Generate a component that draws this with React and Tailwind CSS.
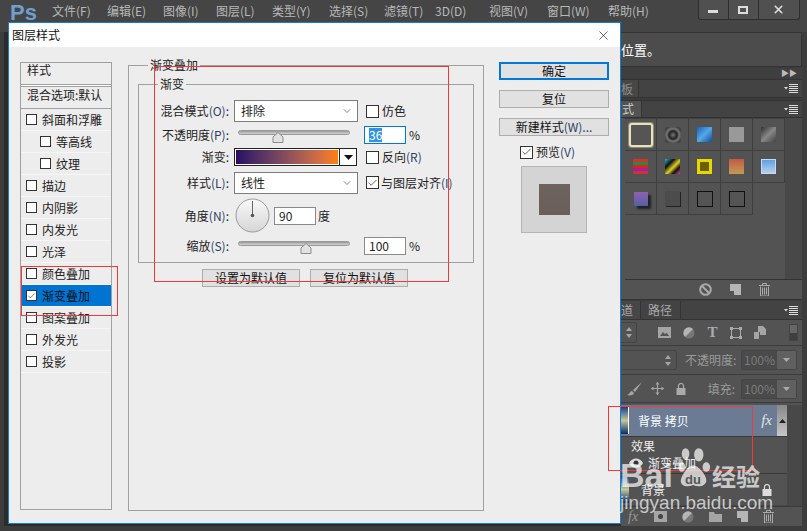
import { X, ChevronDown, Check } from "lucide-react";

const font = { fontFamily: '"Noto Sans CJK SC", "Liberation Sans", sans-serif' };

const menus = [
  ["文件(F)", "w-[55px]"],
  ["编辑(E)", "w-[56px]"],
  ["图像(I)", "w-[53px]"],
  ["图层(L)", "w-[56px]"],
  ["类型(Y)", "w-[57px]"],
  ["选择(S)", "w-[55px]"],
  ["滤镜(T)", "w-[51px]"],
  ["3D(D)", "w-[54px]"],
  ["视图(V)", "w-[58px]"],
  ["窗口(W)", "w-[61px]"],
  ["帮助(H)", "w-[60px]"],
];

const effects = [
  { name: "斜面和浮雕" },
  { name: "等高线", sub: true },
  { name: "纹理", sub: true },
  { name: "描边" },
  { name: "内阴影" },
  { name: "内发光" },
  { name: "光泽" },
  { name: "颜色叠加" },
  { name: "渐变叠加", active: true },
  { name: "图案叠加" },
  { name: "外发光" },
  { name: "投影" },
];

function CheckBox({ checked, big }) {
  return (
    <span
      className={`flex shrink-0 items-center justify-center border border-[#333] bg-white ${
        big ? "h-[13px] w-[13px]" : "h-[11px] w-[11px]"
      }`}
    >
      {checked && <Check size={big ? 12 : 10} strokeWidth={1.8} className="text-[#444]" />}
    </span>
  );
}

function Label({ text, hint, extra }) {
  return (
    <span className="w-[91px] pr-[1px] text-right text-[12px] text-[#222]">
      {text}
      {hint && <span className="text-[#2b3f66]">{hint}</span>}
      {extra || ":"}
    </span>
  );
}

function Select({ value }) {
  return (
    <div className="flex h-[22px] w-[124px] items-center justify-between border border-[#7d7d7d] bg-white pl-[6px] pr-[4px] text-[12px] text-[#222]">
      <span>{value}</span>
      <ChevronDown size={12} strokeWidth={1.3} className="text-[#444]" />
    </div>
  );
}

function Slider({ pos }) {
  return (
    <div className="relative ml-[8px] h-[18px] w-[112px]">
      <div className="mt-[4px] h-[5px] rounded-full border border-[#999] bg-gradient-to-b from-[#9a9a9a] to-[#d4d4d4]" />
      <svg width="12" height="11" viewBox="0 0 12 11" className="absolute top-[6px]" style={{ left: pos }}>
        <path d="M6 .5 11 5v5.5H1V5z" fill="#e2e2e2" stroke="#8c8c8c" />
      </svg>
    </div>
  );
}

function NumberBox({ value, focus }) {
  return (
    <div
      className={`flex h-[18px] w-[42px] items-center border bg-white pl-[4px] text-[12px] text-[#222] ${
        focus ? "border-[#0078d7]" : "border-[#8a8a8a]"
      }`}
    >
      {focus ? <span className="bg-[#3393df] leading-[14px] text-white">{value}</span> : value}
    </div>
  );
}

function DialogButton({ children, className }) {
  return (
    <div
      className={`flex items-center justify-center bg-[#e1e1e1] text-[12px] leading-none text-[#111] ${className}`}
    >
      {children}
    </div>
  );
}

function GroupLegend({ children, className }) {
  return (
    <span className={`absolute bg-[#ededed] px-[2px] text-[12px] leading-[14px] text-[#222] ${className}`}>
      {children}
    </span>
  );
}

function Dial() {
  return (
    <svg width="35" height="35" viewBox="0 0 35 35" className="shrink-0">
      <defs>
        <linearGradient id="dial" x1="0" y1="0" x2="0" y2="1">
          <stop offset="0" stopColor="#f8f8f8" />
          <stop offset="1" stopColor="#d6d6d6" />
        </linearGradient>
      </defs>
      <circle cx="17.5" cy="17.5" r="16.5" fill="url(#dial)" stroke="#9a9a9a" />
      <path d="M17.5 3v14" stroke="#666" strokeWidth="1" />
      <circle cx="17.5" cy="17.5" r="1.8" fill="#555" />
    </svg>
  );
}

function Dialog() {
  return (
    <div className="absolute left-[8px] top-[22px] flex h-[502px] w-[613px] flex-col border border-[#0f7fd8] bg-[#ededed]" style={font}>
      <div className="flex h-[24px] shrink-0 items-center justify-between bg-white pl-[3px] pr-[9px] text-[12px] text-[#111]">
        <span>图层样式</span>
        <X size={15} strokeWidth={1} className="text-[#111]" />
      </div>

      <div className="flex flex-1 pl-[11px] pr-[11px] pt-[15px]">
        {/* left list */}
        <div className="mr-[16px] h-[448px] w-[92px] shrink-0 border border-[#a0a0a0] text-[12px] text-[#222]">
          <div className="h-[21px] pl-[6px] leading-[14px]">样式</div>
          <div className="h-[25px] border-y border-[#a0a0a0] pl-[6px] leading-[19px] [box-shadow:inset_0_1px_0_#fff,inset_0_2px_0_#a0a0a0]">混合选项:默认</div>
          {effects.map((e) => (
            <div
              key={e.name}
              className={`flex h-[22px] items-center border-b border-[#f6f6f6] ${e.sub ? "pl-[19px]" : "pl-[5px]"} ${
                e.active ? "bg-[#0074d3] text-[#111]" : ""
              }`}
            >
              <CheckBox checked={e.active} />
              <span className="ml-[5px] whitespace-nowrap">{e.name}</span>
            </div>
          ))}
        </div>

        {/* main group */}
        <div className="relative mt-[3px] h-[446px] w-[356px] shrink-0 border border-[#a0a0a0] pl-[9px] pt-[18px]">
          <GroupLegend className="left-[19px] top-[-8px]">渐变叠加</GroupLegend>
          <div className="relative h-[179px] w-[336px] border border-[#a0a0a0] pt-[15px]">
            <GroupLegend className="left-[19px] top-[-8px]">渐变</GroupLegend>

            <div className="flex h-[22px] items-center">
              <Label text="混合模式" hint="(O)" />
              <span className="w-[4px]" />
              <Select value="排除" />
              <span className="w-[8px]" />
              <CheckBox big />
              <span className="ml-[3px] text-[12px] text-[#222]">仿色</span>
            </div>

            <div className="mt-[4px] flex h-[18px] items-center">
              <Label text="不透明度" hint="(P)" />
              <Slider pos="34px" />
              <span className="w-[14px]" />
              <NumberBox value="36" focus />
              <span className="ml-[3px] text-[12px] text-[#222]">%</span>
            </div>

            <div className="mt-[4px] flex h-[18px] items-center">
              <Label text="渐变" extra=":" />
              <span className="w-[4px]" />
              <div className="flex h-[18px] w-[123px] border border-[#222] bg-white">
                <div className="m-[1px] w-[102px] bg-gradient-to-r from-[#2b0a63] to-[#ff7f00]" />
                <div className="flex flex-1 items-center justify-center border-l border-[#222]">
                  <svg width="9" height="5" viewBox="0 0 9 5">
                    <path d="M0 0h9L4.5 5z" fill="#111" />
                  </svg>
                </div>
              </div>
              <span className="w-[9px]" />
              <CheckBox big />
              <span className="ml-[3px] text-[12px] text-[#222]">反向<span className="text-[#2b3f66]">(R)</span></span>
            </div>

            <div className="mt-[6px] flex h-[21px] items-center">
              <Label text="样式" hint="(L)" />
              <span className="w-[4px]" />
              <Select value="线性" />
              <span className="w-[8px]" />
              <CheckBox big checked />
              <span className="ml-[2px] whitespace-nowrap text-[12px] text-[#222]">与图层对齐<span className="text-[#2b3f66]">(I)</span></span>
            </div>

            <div className="mt-[5px] flex h-[35px] items-center">
              <Label text="角度" hint="(N)" />
              <span className="w-[5px]" />
              <Dial />
              <span className="w-[4px]" />
              <NumberBox value="90" />
              <span className="ml-[2px] text-[12px] text-[#222]">度</span>
            </div>

            <div className="mt-[4px] flex h-[18px] items-center">
              <Label text="缩放" hint="(S)" />
              <Slider pos="62px" />
              <span className="w-[14px]" />
              <NumberBox value="100" />
              <span className="ml-[3px] text-[12px] text-[#222]">%</span>
            </div>
          </div>

          <div className="ml-[64px] mt-[6px] flex gap-[10px]">
            <DialogButton className="h-[18px] w-[98px] border border-[#adadad]">设置为默认值</DialogButton>
            <DialogButton className="h-[18px] w-[98px] border border-[#adadad]">复位为默认值</DialogButton>
          </div>
        </div>

        {/* right buttons */}
        <div className="ml-[15px] w-[110px] shrink-0">
          <DialogButton className="h-[18px] w-[110px] border-2 border-[#0078d7]">确定</DialogButton>
          <DialogButton className="mt-[10px] h-[18px] w-[110px] border border-[#adadad]">复位</DialogButton>
          <DialogButton className="mt-[10px] h-[18px] w-[110px] border border-[#adadad]">
            新建样式<span className="text-[#2b3f66]">(W)...</span>
          </DialogButton>
          <div className="ml-[21px] mt-[9px] flex h-[14px] items-center text-[12px] text-[#222]">
            <CheckBox big checked />
            <span className="ml-[3px]">预览<span className="text-[#2b3f66]">(V)</span></span>
          </div>
          <div className="ml-[22px] mt-[7px] flex h-[67px] w-[66px] items-center justify-center border border-[#b5b5b5] bg-[#d4d4d4]">
            <div className="h-[31px] w-[31px] bg-gradient-to-b from-[#6e625e] to-[#6a5f5b]" />
          </div>
        </div>
      </div>
    </div>
  );
}

function Swatch({ className }) {
  return (
    <div className="flex h-[32px] w-[32px] items-center justify-center border-b border-r border-[#3f3f3f]">
      <div className={className} />
    </div>
  );
}

function StylesPanel() {
  return (
    <div className="flex h-[162px] border-b border-[#333]">
      <div className="w-[160px] shrink-0">
        <div className="grid grid-cols-5 border-t border-[#3f3f3f]">
          <Swatch className="h-[24px] w-[24px] rounded-[3px] border-2 border-[#e6e2bd] bg-[#555] shadow-[0_0_0_1px_#8f8d70]" />
          <Swatch className="h-[16px] w-[16px] rounded-[4px] bg-[radial-gradient(circle,#777_0%,#222_35%,#777_55%,#111_100%)]" />
          <Swatch className="h-[15px] w-[15px] bg-gradient-to-br from-[#1a62b8] via-[#55a8e8] to-[#104f98]" />
          <Swatch className="h-[15px] w-[15px] bg-[#999]" />
          <Swatch className="h-[15px] w-[15px] bg-gradient-to-br from-[#333] via-[#888] to-[#444]" />
          <Swatch className="h-[15px] w-[15px] bg-[linear-gradient(180deg,#c33_0px,#c33_3px,#2a8a3a_3px,#2a8a3a_6px,#d22_6px,#d22_9px,#a020a0_9px,#a020a0_12px,#c33_12px)]" />
          <Swatch className="h-[15px] w-[15px] bg-[linear-gradient(135deg,#19c0d8_0%,#111_30%,#e0d020_55%,#111_75%,#e040a0_100%)]" />
          <Swatch className="h-[15px] w-[15px] border-[3px] border-[#e8d800] bg-[#6b6000]" />
          <Swatch className="h-[15px] w-[15px] bg-gradient-to-b from-[#c05a48] to-[#c49a50]" />
          <Swatch className="h-[15px] w-[15px] border border-[#c8d8f0] bg-gradient-to-b from-[#5ea0e0] to-[#b8d0f0]" />
          <Swatch className="h-[14px] w-[14px] bg-gradient-to-b from-[#9060b0] to-[#5060a0] shadow-[3px_3px_2px_#222]" />
          <Swatch className="h-[15px] w-[15px] bg-[#4c4c4c] shadow-[1px_1px_0_#222]" />
          <Swatch className="h-[16px] w-[16px] border border-[#111] bg-[#555]" />
          <Swatch className="h-[16px] w-[16px] border border-[#111] bg-[#555]" />
          <div />
        </div>
      </div>
      <div className="flex-1 bg-[#484848]" />
    </div>
  );
}

function PanelMenu() {
  return (
    <svg width="14" height="9" viewBox="0 0 14 9">
      <path d="M0 3h4L2 5.5z" fill="#ddd" />
      <path d="M5 .5h9M5 2.5h9M5 4.5h9M5 6.5h9M5 8.5h9" stroke="#ddd" strokeWidth="1" />
    </svg>
  );
}

function Trash() {
  return (
    <svg width="11" height="13" viewBox="0 0 11 13">
      <path d="M0 2.5h11M3.5 2V.5h4V2M1.5 3.5V13h8V3.5" fill="none" stroke="#aaa" />
      <path d="M3.5 4.5v7M5.5 4.5v7M7.5 4.5v7" stroke="#aaa" />
    </svg>
  );
}

function NewLayer() {
  return (
    <svg width="11" height="11" viewBox="0 0 11 11">
      <path d="M0 0h11v11H4V7H0z" fill="#b5b5b5" />
    </svg>
  );
}

function PercentBox() {
  return (
    <div className="flex h-[20px] w-[56px] rounded-[2px] border border-[#444] bg-[#4a4a4a] text-[12px] text-[#7a7a7a]">
      <span className="w-[35px] pl-[2px] leading-[18px]">100%</span>
      <span className="flex flex-1 items-center justify-center bg-[#606060]">
        <svg width="7" height="4" viewBox="0 0 7 4"><path d="M0 0h7L3.5 4z" fill="#aaa" /></svg>
      </span>
    </div>
  );
}

function Updown() {
  return (
    <svg width="6" height="11" viewBox="0 0 6 11">
      <path d="M3 0l3 4H0zM3 11l3-4H0z" fill="#a5a5a5" />
    </svg>
  );
}

function Lock({ color = "#aaa" }) {
  return (
    <svg width="10" height="12" viewBox="0 0 10 12">
      <path d="M2.5 5V3a2.5 2.5 0 0 1 5 0v2" fill="none" stroke={color} strokeWidth="1.2" />
      <rect x="0.5" y="5" width="9" height="7" fill={color} />
    </svg>
  );
}

function LayersPanel() {
  return (
    <div className="flex min-h-0 flex-1 flex-col text-[12px]">
      <div className="flex h-[19px] shrink-0 items-center justify-between border-b border-[#333] bg-[#434343] pr-[4px] text-[#a8a8a8]">
        <div className="flex h-full">
          <span className="w-[20px] border-r border-[#333] bg-[#474747] leading-[18px]">道</span>
          <span className="w-[40px] border-r border-[#333] pl-[7px] leading-[18px]">路径</span>
        </div>
        <PanelMenu />
      </div>

      <div className="flex h-[26px] shrink-0 items-center border-b border-[#3c3c3c]">
        <div className="flex h-[21px] w-[16px] items-center justify-end rounded-r-[3px] border border-l-0 border-[#444] pr-[4px]"><Updown /></div>
        <div className="ml-[21px] flex items-center gap-[12px]">
          <svg width="13" height="11" viewBox="0 0 13 11"><rect width="13" height="11" fill="#a5a5a5" /><path d="M2 9l3-4 2 2 2-1 2 3z" fill="#555" /></svg>
          <svg width="12" height="12" viewBox="0 0 12 12"><circle cx="6" cy="6" r="5.5" fill="#777" /><path d="M2 10A5.5 5.5 0 0 1 10 2z" fill="#b5b5b5" /></svg>
          <span className="w-[11px] text-center font-['Liberation_Serif'] text-[15px] font-bold leading-none text-[#aaa]">T</span>
          <svg width="12" height="12" viewBox="0 0 12 12"><rect x="1.5" y="1.5" width="9" height="9" fill="none" stroke="#aaa" /><path d="M0 0h3v3H0zM9 0h3v3H9zM0 9h3v3H0zM9 9h3v3H9z" fill="#aaa" /></svg>
          <svg width="12" height="13" viewBox="0 0 12 13"><path d="M4 0h5l3 3v6H6V6H4zM0 6h5v7H0z" fill="#a5a5a5" /></svg>
        </div>
        <div className="ml-auto mr-[4px] flex h-[17px] w-[9px] flex-col border border-[#444] bg-[#3f3f3f]"><div className="h-[8px] bg-[#666]" /></div>
      </div>

      <div className="flex h-[29px] shrink-0 items-center border-b border-[#3c3c3c] pr-[5px]">
        <div className="flex h-[20px] w-[56px] items-center justify-end rounded-r-[3px] border border-l-0 border-[#444] pr-[5px]"><Updown /></div>
        <span className="ml-[8px] whitespace-nowrap text-[#9a9a9a]">不透明度:</span>
        <span className="ml-auto"><PercentBox /></span>
      </div>

      <div className="flex h-[28px] shrink-0 items-center border-b border-[#3c3c3c] pr-[5px]">
        <div className="ml-[6px] flex items-center gap-[9px]">
          <svg width="15" height="14" viewBox="0 0 15 14"><path d="M15 0 6 8l2 2zM5 9c-2 0-2 3-5 4 3 1 7 0 7-2z" fill="#a5a5a5" /></svg>
          <svg width="13" height="13" viewBox="0 0 13 13"><path d="M6.5 0v13M0 6.5h13" stroke="#a5a5a5" strokeWidth="1.2" /><path d="M6.5 0l2 2.5h-4zM6.5 13l2-2.5h-4zM0 6.5l2.5-2v4zM13 6.5l-2.5-2v4z" fill="#a5a5a5" /></svg>
          <span className="ml-[3px]"><Lock /></span>
        </div>
        <span className="ml-auto mr-[6px] text-[#9a9a9a]">填充:</span>
        <PercentBox />
      </div>

      <div className="mt-[2px] flex min-h-0 flex-1 bg-[#484848]">
        <div className="w-[166px]">
          <div className="flex h-[32px] items-center border-b border-[#3a3a3a] bg-[#6a7b93]">
            <div className="h-[27px] w-[8px] border-r border-white bg-gradient-to-b from-[#1a3f8a] via-[#c8c890] to-[#0c2a6a]" />
            <span className="ml-[9px] whitespace-pre text-[12px] text-white">背景 拷贝</span>
            <span className="ml-auto mr-[5px] font-['Liberation_Serif'] text-[15px] italic text-[#e5e5e5]">fx</span>
            <div className="flex h-full w-[10px] items-center justify-center bg-gradient-to-b from-[#888] to-[#c8c8c8]">
              <svg width="7" height="4" viewBox="0 0 7 4"><path d="M3.5 0 7 4H0z" fill="#222" /></svg>
            </div>
          </div>
          <div className="h-[37px] border-b border-[#3a3a3a] bg-[#535353] text-[#eee]">
            <div className="flex h-[18px] items-center pl-[10px]">效果</div>
            <div className="flex h-[15px] items-center pl-[8px]">
              <svg width="14" height="10" viewBox="0 0 14 10" className="mr-[5px]"><path d="M0 5c3-6 11-6 14 0-3 6-11 6-14 0z" fill="#ddd" /><circle cx="7" cy="5" r="2.5" fill="#333" /></svg>
              渐变叠加
            </div>
          </div>
          <div className="flex h-[31px] items-center bg-[#535353] text-[#eee]">
            <div className="h-[27px] w-[8px] bg-gradient-to-b from-[#1a3f8a] via-[#c8c890] to-[#0c2a6a]" />
            <span className="ml-[12px]">背景</span>
            <span className="ml-auto mr-[15px]"><Lock color="#ddd" /></span>
          </div>
        </div>
      </div>

      <div className="flex h-[20px] shrink-0 items-center border-t border-[#3a3a3a] pl-[7px]">
        <span className="font-['Liberation_Serif'] text-[14px] italic text-[#9a9a9a]">fx</span>
        <div className="ml-[16px] flex items-center gap-[15px]">
          <svg width="13" height="11" viewBox="0 0 13 11"><rect width="13" height="11" fill="#a5a5a5" /><circle cx="6.5" cy="5.5" r="2.5" fill="#444" /></svg>
          <svg width="12" height="12" viewBox="0 0 12 12"><circle cx="6" cy="6" r="5.5" fill="#777" /><path d="M2 10A5.5 5.5 0 0 1 10 2z" fill="#b5b5b5" /></svg>
          <svg width="13" height="10" viewBox="0 0 13 10"><path d="M0 0h5l1 2h7v8H0z" fill="#a5a5a5" /></svg>
          <NewLayer />
          <Trash />
        </div>
      </div>
    </div>
  );
}

function Watermark() {
  return (
    <div className="pointer-events-none absolute left-[620px] top-[445px] w-[145px] text-white/70" style={font}>
      <div className="flex h-[46px] items-end">
        <span className="w-[58px] font-['Liberation_Sans'] text-[34px] font-bold leading-[32px]">Bai</span>
        <div className="relative h-[46px] w-[34px] shrink-0">
          <svg width="34" height="46" viewBox="0 0 36 46">
            <ellipse cx="8" cy="8" rx="4" ry="6" fill="#fff" fillOpacity=".7" />
            <ellipse cx="22" cy="9" rx="5" ry="7" fill="#fff" fillOpacity=".7" />
            <ellipse cx="4" cy="22" rx="3.5" ry="5" fill="#fff" fillOpacity=".7" />
            <ellipse cx="30" cy="22" rx="4" ry="5" fill="#fff" fillOpacity=".7" />
            <path d="M16 20c5 0 14 10 14 16s-8 8-14 5c-6 3-14 1-13-5 1-6 8-16 13-16z" fill="#fff" fillOpacity=".7" />
          </svg>
          <span className="absolute left-[7px] top-[28px] font-['Liberation_Sans'] text-[13px] font-bold leading-none text-[#555]">du</span>
        </div>
        <span className="text-[24px] font-bold leading-[30px]">经验</span>
      </div>
      <div className="mt-[1px] font-['Liberation_Sans'] text-[19px] leading-[22px]">jingyan.baidu.com</div>
    </div>
  );
}

export default function App() {
  return (
    <div className="relative h-[531px] w-[807px] overflow-hidden bg-[#3c3c3c]" style={font}>
      {/* menu bar */}
      <div className="flex h-[32px] bg-[#454545]">
        <span className="ml-[10px] w-[42px] font-['Liberation_Sans'] text-[22px] font-bold leading-[26px] text-[#6f9fd0]">Ps</span>
        <div className="flex h-[22px] items-center text-[12px] text-[#b8b8b8]">
          {menus.map(([name, w]) => (
            <span key={name} className={`${w} whitespace-nowrap`}>{name}</span>
          ))}
        </div>
        <div className="ml-auto mr-[7px] flex h-[20px] w-[102px] rounded-b-[3px] border border-t-0 border-[#2f2f2f] bg-[#505050]">
          <span className="flex flex-1 items-center justify-center border-r border-[#2f2f2f]"><span className="mt-[4px] h-[3px] w-[10px] bg-[#ddd]" /></span>
          <span className="flex flex-1 items-center justify-center border-r border-[#2f2f2f]"><span className="h-[8px] w-[10px] border-2 border-[#ddd]" /></span>
          <span className="flex flex-[1.4] items-center justify-center"><X size={13} strokeWidth={3} className="text-[#ddd]" /></span>
        </div>
      </div>

      <div className="flex h-[494px]">
        <div className="ml-[4px] w-[617px] shrink-0 bg-[#2b2b2b]" />
        <div className="mr-[5px] flex min-w-0 flex-1 flex-col">
          {/* options hint */}
          <div className="flex h-[35px] shrink-0 items-center border-y border-r border-[#333] bg-[#4c4c4c] text-[13px] text-white">位置。</div>
          <div className="mt-[1px] flex h-[10px] shrink-0 items-center justify-end bg-[#3f3f3f] pr-[5px] text-[8px] leading-none text-[#bbb]">▶▶</div>

          <div className="mt-[1px] flex h-[19px] shrink-0 items-center justify-between border-y border-[#333] bg-[#434343] pr-[4px] text-[12px] text-[#8d8d8d]">
            <span className="flex h-full w-[18px] items-center border-r border-[#333] bg-[#474747]">板</span>
            <PanelMenu />
          </div>
          <div className="mt-[2px] flex h-[18px] shrink-0 items-center justify-between border-y border-[#333] bg-[#434343] pr-[4px] text-[12px] text-[#ccc]">
            <span className="flex h-full w-[21px] items-center border-r border-[#333] bg-[#535353] pl-[1px]">式</span>
            <PanelMenu />
          </div>

          <div className="flex min-h-0 flex-1 flex-col bg-[#535353]">
            <div className="shrink-0 pl-[4px]"><StylesPanel /></div>
            <div className="flex h-[20px] shrink-0 items-center justify-end gap-[18px] border-b border-[#333] pr-[6px]">
              <svg width="13" height="13" viewBox="0 0 13 13"><circle cx="6.5" cy="6.5" r="5.3" fill="none" stroke="#aaa" strokeWidth="2" /><path d="M3 3l7 7" stroke="#aaa" strokeWidth="2" /></svg>
              <NewLayer />
              <Trash />
              <span className="w-[8px]" />
            </div>
            <div className="h-[1px] shrink-0 bg-[#3c3c3c]" />
            <LayersPanel />
          </div>
        </div>
      </div>

      <Dialog />

      {/* red annotation boxes */}
      <div className="absolute left-[154px] top-[66px] h-[216px] w-[295px] border border-[#f03a3a]" />
      <div className="absolute left-[21px] top-[266px] h-[50px] w-[97px] border border-[#f03a3a]" />
      <div className="absolute left-[608px] top-[406px] h-[65px] w-[145px] border border-[#f03a3a]" />

      <Watermark />
    </div>
  );
}
